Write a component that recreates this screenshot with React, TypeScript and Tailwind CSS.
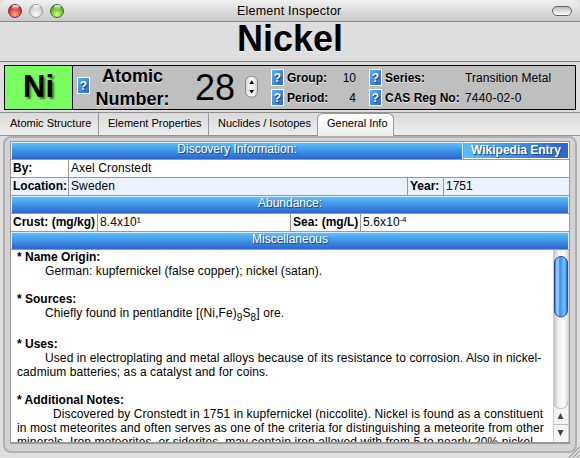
import type { ReactNode } from "react";

const blueBar = "bg-linear-to-b from-[#5cbffd] to-[#2b66cd]";

function Help() {
  return (
    <span className="flex h-[17px] w-[13px] shrink-0 items-center justify-center border border-white bg-linear-to-br from-[#57b4f8] to-[#2c68cc] text-[12px] leading-none font-bold text-white [text-shadow:1px_1px_1px_#234]">
      ?
    </span>
  );
}

function Light({ ring, className }: { ring: string; className: string }) {
  return (
    <span className={`relative h-[14px] w-[14px] rounded-full border ${ring} ${className}`}>
      <span className="absolute top-0 left-[2.5px] h-[4px] w-[7px] rounded-full bg-linear-to-b from-white/90 to-white/20" />
    </span>
  );
}

function Bar({ children, className = "" }: { children: ReactNode; className?: string }) {
  return (
    <div className={`h-[17px] shrink-0 border-x border-t border-[#d8ecff] text-center leading-[12px] text-white [text-shadow:1px_1px_1px_#24406c] ${blueBar} ${className}`}>
      {children}
    </div>
  );
}

function Cell({ children, className = "" }: { children: ReactNode; className?: string }) {
  return <div className={`h-[17px] leading-[17px] whitespace-nowrap ${className}`}>{children}</div>;
}

function Line({ children, className = "" }: { children?: ReactNode; className?: string }) {
  return (
    <div className="h-[14px] leading-[14px] whitespace-nowrap">
      <span className={className}>{children}</span>
    </div>
  );
}

const row = "flex h-[18px] shrink-0 border-b border-[#999]";

export default function App() {
  return (
    <div className="flex h-[458px] w-[580px] flex-col overflow-hidden bg-[#dedede] bg-[repeating-linear-gradient(to_bottom,#dfdfdf_0_2px,#dddddd_2px_4px)] font-['Liberation_Sans',Arial,sans-serif] text-[12px] text-black">
      <header className="flex h-[22px] shrink-0 items-center rounded-t-[7px] border-b border-[#868686] bg-linear-to-b from-[#f0f0f0] to-[#c9c9c9] pl-2">
        <div className="flex w-[220px] gap-[7px]">
          <Light ring="border-[#74302c]" className="bg-[radial-gradient(circle_at_50%_80%,#ffa79b,#dc4842_50%,#902a26)]" />
          <Light ring="border-[#999]" className="bg-[radial-gradient(circle_at_50%_80%,#fafafa,#d5d5d5_55%,#aaa)]" />
          <Light ring="border-[#3e6425]" className="bg-[radial-gradient(circle_at_50%_80%,#d2ff87,#75c52f_50%,#386d1c)]" />
        </div>
        <h1 className="w-[124px] pl-[9px] text-[12.5px] leading-[20px] tracking-[0.22px] whitespace-nowrap">Element Inspector</h1>
        <span className="ml-[200px] h-[10px] w-[20px] rounded-full border-[1.5px] border-[#666] bg-linear-to-b from-[#bbb] to-[#fff]" />
      </header>

      <div className="flex h-[40px] shrink-0 justify-center border-b border-[#808080] text-[36px] leading-[33px] font-bold">
        <span className="[text-shadow:0_1px_1px_#fff]">Nickel</span>
      </div>

      <section className="mx-[4px] mt-[3px] flex h-[45px] shrink-0 border border-black bg-[#bfbfbf]">
        <div className="flex w-[68px] items-center justify-center border-r border-black bg-[#7aff62] text-[31px] leading-none font-bold [text-shadow:2px_2px_2px_#3b7831]">
          <span className="pb-[2px]">Ni</span>
        </div>
        <div className="flex w-[17px] items-center justify-end pb-[4px]">
          <Help />
        </div>
        <div className="w-[85px] text-center text-[18px] leading-[23px] font-bold [text-shadow:0_1px_1px_#eee]">
          <div className="-mt-[1px]">Atomic</div>
          <div>Number:</div>
        </div>
        <div className="w-[67px] pl-[20px] text-[36px] leading-[44px]">28</div>
        <div className="flex w-[18px] items-center pb-[2px] pl-[3px]">
          <svg width="14" height="22" viewBox="0 0 14 22">
            <defs>
              <linearGradient id="step" x1="0" x2="1">
                <stop offset="0" stopColor="#d5d5d5" />
                <stop offset=".5" stopColor="#fff" />
                <stop offset="1" stopColor="#d0d0d0" />
              </linearGradient>
            </defs>
            <rect x=".5" y=".5" width="12" height="20.500" rx="5" fill="url(#step)" stroke="#888" />
            <path d="M4.300 8 6.700 4.200 9.100 8ZM4.300 14 6.700 17.500 9.100 14Z" />
          </svg>
        </div>
        <div className="grid w-[96px] grid-cols-[28px_1fr_auto] content-center items-center gap-y-[2px]">
          <div className="flex justify-end pr-[4px]"><Help /></div>
          <b className="-ml-px [text-shadow:0_1px_1px_#eee]">Group:</b><span>10</span>
          <div className="flex justify-end pr-[4px]"><Help /></div>
          <b className="-ml-px [text-shadow:0_1px_1px_#eee]">Period:</b><span className="text-right">4</span>
        </div>
        <div className="ml-[13px] grid grid-cols-[16px_80px_auto] content-center items-center gap-y-[2px]">
          <Help /><b className="whitespace-nowrap [text-shadow:0_1px_1px_#eee]">Series:</b><span className="tracking-[0.08px]">Transition Metal</span>
          <Help /><b className="whitespace-nowrap [text-shadow:0_1px_1px_#eee]">CAS Reg No:</b><span className="tracking-[0.2px]">7440-02-0</span>
        </div>
      </section>

      <nav className="mt-[2px] flex h-[24px] shrink-0 border-y border-[#929292] bg-linear-to-b from-[#dadada] to-[#eee] text-[11px] leading-[20px] whitespace-nowrap">
        <span className="w-[99px] border-r border-[#999] pl-[10px]">Atomic Structure</span>
        <span className="w-[110px] border-r border-[#999] pl-[9px]">Element Properties</span>
        <span className="w-[108px] pl-[9px]">Nuclides / Isotopes</span>
        <span className="h-[23px] w-[77px] rounded-t-[6px] border-x border-t border-[#999] bg-linear-to-b from-white to-[#eee] pl-[9px] leading-[18px]">General Info</span>
      </nav>

      <main className="mx-[3px] h-[317px] shrink-0 rounded-[8px] border-2 border-[#b0b0b0] bg-[#d2d2d2] bg-[repeating-linear-gradient(to_bottom,#d4d4d4_0_2px,#d1d1d1_2px_4px)] px-[5px] pt-[3px]">
        <div className="flex h-[303px] w-[560px] flex-col border border-b-2 border-[#999] bg-white">
          <div className={row}>
            <Bar className="w-[452px]">Discovery Information:</Bar>
            <div className="w-[106px] shrink-0 border border-white border-l-[#999] bg-linear-to-r from-[#58bdfd] to-[#2c65ce] text-center leading-[15px] font-bold text-white [text-shadow:1px_1px_1px_#24406c]">Wikipedia Entry</div>
          </div>
          <div className={row}>
            <Cell className="w-[58px] border-r border-[#999] pl-[2px] font-bold">By:</Cell>
            <Cell className="pl-[2px] tracking-[0.12px]">Axel Cronstedt</Cell>
          </div>
          <div className={`${row} bg-[#eaf1ff]`}>
            <Cell className="w-[58px] border-r border-[#999] pl-[2px] font-bold">Location:</Cell>
            <Cell className="w-[339px] border-r border-[#999] pl-[2px] tracking-[0.12px]">Sweden</Cell>
            <Cell className="w-[36px] border-r border-[#999] pl-[2px] font-bold">Year:</Cell>
            <Cell className="pl-[2px]">1751</Cell>
          </div>
          <div className={row}><Bar className="w-full">Abundance:</Bar></div>
          <div className={row}>
            <Cell className="w-[87px] border-r border-[#999] pl-[2px] font-bold">Crust: (mg/kg)</Cell>
            <Cell className="w-[193px] border-r border-[#999] pl-[2px] tracking-[0.12px]">8.4x10¹</Cell>
            <Cell className="w-[70px] border-r border-[#999] pl-[2px] font-bold">Sea: (mg/L)</Cell>
            <Cell className="pl-[2px] tracking-[0.12px]">5.6x10<span className="relative -top-[4px] text-[8px] tracking-tighter">-4</span></Cell>
          </div>
          <div className={row}><Bar className="w-full">Miscellaneous</Bar></div>
          <div className="flex h-[192px] overflow-hidden">
            <article className="h-[192px] w-[542px] overflow-hidden pl-[6px] tracking-[0.1px]">
              <Line className="font-bold tracking-normal">* Name Origin:</Line>
              <Line className="pl-[28px]">German: kupfernickel (false copper); nickel (satan).</Line>
              <Line />
              <Line className="font-bold tracking-normal">* Sources:</Line>
              <Line className="pl-[28px]">
                Chiefly found in pentlandite [(Ni,Fe)<span className="relative top-[4px] text-[10px]">9</span>S<span className="relative top-[4px] text-[10px]">8</span>] ore.
              </Line>
              <div className="h-[17px]" />
              <Line className="font-bold tracking-normal">* Uses:</Line>
              <Line className="pl-[28px]">Used in electroplating and metal alloys because of its resistance to corrosion. Also in nickel-</Line>
              <Line>cadmium batteries; as a catalyst and for coins.</Line>
              <Line />
              <Line className="font-bold tracking-normal">* Additional Notes:</Line>
              <Line className="pl-[36px]">Discovered by Cronstedt in 1751 in kupfernickel (niccolite). Nickel is found as a constituent</Line>
              <Line>in most meteorites and often serves as one of the criteria for distinguishing a meteorite from other</Line>
              <Line>minerals. Iron meteorites, or siderites, may contain iron alloyed with from 5 to nearly 20% nickel.</Line>
            </article>
            <svg width="16" height="192" viewBox="0 0 16 192" className="shrink-0">
              <defs>
                <linearGradient id="track" x1="0" x2="1">
                  <stop offset="0" stopColor="#bbb" />
                  <stop offset=".35" stopColor="#eee" />
                  <stop offset=".7" stopColor="#fff" />
                  <stop offset="1" stopColor="#ddd" />
                </linearGradient>
                <linearGradient id="thumb" x1="0" x2="1">
                  <stop offset="0" stopColor="#1551c6" />
                  <stop offset=".17" stopColor="#9ccdfc" />
                  <stop offset=".35" stopColor="#82bcf7" />
                  <stop offset=".4" stopColor="#3288ee" />
                  <stop offset=".75" stopColor="#72c7ff" />
                  <stop offset="1" stopColor="#236ad7" />
                </linearGradient>
              </defs>
              <path fill="#f4f4f4" d="M0 0h16v192H0Z" />
              <path fill="url(#track)" d="M0 0h15v151a7 7 0 0 1-7.500 7.500A7 7 0 0 1 0 151Z" />
              <path d="M.5 151q0 7.500 7 7.500t7.500-7.500M0 174.500h16" fill="none" stroke="#bbb" />
              <path d="M.5 0v192M15.500 0v192" stroke="#ccc" />
              <rect x="1.500" y="6.500" width="13" height="60.500" rx="6.500" fill="url(#thumb)" stroke="#1b4da8" />
              <path fill="#444" d="M4.500 169 7.500 163l3 6ZM4.500 180h6l-3 6Z" />
            </svg>
          </div>
        </div>
      </main>
      <svg className="-mt-[7px] ml-[568px] shrink-0" width="12" height="12" viewBox="0 0 12 12">
        <path d="M1 11.500 11.500 1M5 11.500 11.500 5M9 11.500 11.500 9" stroke="#777" />
      </svg>
    </div>
  );
}
